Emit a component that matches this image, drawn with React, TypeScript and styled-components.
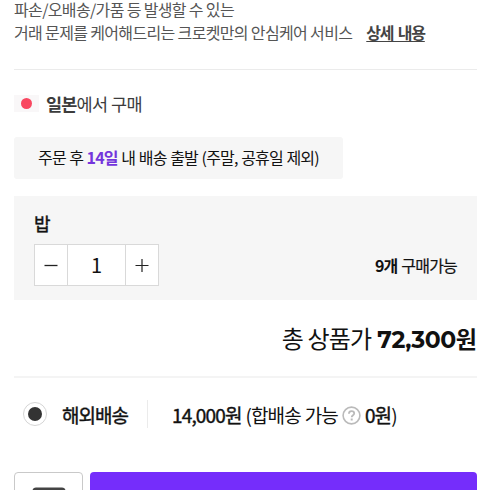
import React from "react";
import styled, { createGlobalStyle } from "styled-components";

const GlobalStyle = createGlobalStyle`
  * { box-sizing: border-box; }
  body {
    margin: 0;
    background: #fff;
    color: #111;
    font-family: "Noto Sans CJK KR", "Noto Sans", sans-serif;
    overflow: hidden;
  }
  button { font: inherit; color: inherit; cursor: pointer; }
`;

const Page = styled.main`
  width: 490px;
  height: 490px;
  padding: 0 13px 0 14px;
  overflow: hidden;
  display: flex;
  flex-direction: column;
  & > * { flex-shrink: 0; }
`;

const Text = styled.span<{
  $size: number;
  $track?: number;
  $space?: number;
  $bold?: boolean;
  $stroke?: number;
  $color?: string;
}>`
  font-size: ${(p) => p.$size}px;
  letter-spacing: ${(p) => p.$track ?? 0}px;
  word-spacing: ${(p) => p.$space ?? 0}px;
  font-weight: ${(p) => (p.$bold ? 700 : 400)};
  -webkit-text-stroke: ${(p) => p.$stroke ?? 0}px currentColor;
  color: ${(p) => p.$color ?? "inherit"};
  white-space: pre;
`;

const Notice = styled.section`
  height: 70px;
  border-bottom: 1px solid #ebebeb;
  color: #555;
`;

const NoticeLine = styled.div`
  display: flex;
  height: 24px;
  line-height: 24px;
  &:first-child {
    height: 20px;
    line-height: 18px;
  }
`;

const DetailLink = styled.a`
  margin-left: 14px;
  font-size: 16px;
  font-weight: 700;
  letter-spacing: -1.2px;
  word-spacing: 2px;
  color: #444;
  text-decoration: underline;
  text-underline-offset: 2px;
  text-decoration-thickness: 1px;
`;

const Origin = styled.section`
  display: flex;
  align-items: center;
  height: 24px;
  margin-top: 21px;
  color: #3c3c3c;
`;

const Flag = styled.span`
  display: grid;
  place-items: center;
  width: 25px;
  height: 17px;
  margin: 1px 7px 0 0;
  background: #f9f7f8;
  &::after {
    content: "";
    width: 11px;
    height: 11px;
    border-radius: 50%;
    background: #f94760;
  }
`;

const ShippingNote = styled.section`
  display: flex;
  align-items: center;
  width: 329px;
  height: 42px;
  margin-top: 22px;
  padding-left: 24px;
  border-radius: 3px;
  background: #f6f6f6;
  line-height: 40px;
  padding-bottom: 2px;
`;

const OptionCard = styled.section`
  height: 104px;
  margin-top: 17px;
  padding: 14px 20px 0;
  background: #f6f6f6;
`;

const OptionName = styled.div`
  height: 34px;
  line-height: 26px;
`;

const OptionRow = styled.div`
  display: flex;
  align-items: center;
  justify-content: space-between;
`;

const Stepper = styled.div`
  display: grid;
  grid-template-columns: 32px 59px 32px;
  width: 125px;
  height: 42px;
  background: #fff;
  border: 1px solid #d9d9d9;
`;

const StepButton = styled.button`
  display: grid;
  place-items: center;
  padding: 0;
  border: 0;
  background: none;
`;

const Quantity = styled.div`
  border: solid #d9d9d9;
  border-width: 0 1px;
  text-align: center;
  font-size: 20px;
  line-height: 40px;
`;

const Total = styled.section`
  display: flex;
  justify-content: flex-end;
  align-items: baseline;
  height: 78px;
  padding-top: 20px;
  border-bottom: 2px solid #f4f4f4;
  line-height: 36px;
`;

const TotalNumber = styled.span`
  margin-left: 6px;
  font-family: Montserrat, Inter, sans-serif;
  font-size: 23.5px;
  font-weight: 700;
  letter-spacing: -0.4px;
`;

const Delivery = styled.section`
  display: flex;
  align-items: center;
  height: 28px;
  margin-top: 22px;
  padding-left: 9px;
`;

const Radio = styled.span`
  display: grid;
  place-items: center;
  width: 24px;
  height: 24px;
  margin-right: 15px;
  border: 1px solid #d5d5d5;
  border-radius: 50%;
  &::after {
    content: "";
    width: 14px;
    height: 14px;
    border-radius: 50%;
    background: #333;
  }
`;

const DeliveryLabel = styled.span`
  display: flex;
  align-items: center;
  width: 86px;
  height: 28px;
  border-right: 1px solid #ebebeb;
  margin-right: 24px;
`;

const HelpIcon = styled.svg`
  margin: 2px 4px 0 4px;
  flex: none;
`;

const Actions = styled.section`
  display: flex;
  gap: 7px;
  margin-top: 44px;
`;

const SaveButton = styled.button`
  display: flex;
  justify-content: center;
  width: 69px;
  height: 52px;
  padding: 14px 0 0;
  border: 1px solid #c9c9c9;
  border-radius: 4px;
  background: #fff;
`;

const BuyButton = styled.button`
  flex: 1;
  height: 52px;
  border: 0;
  border-radius: 4px;
  background: #752dfb;
`;

export default function App() {
  return (
    <Page>
      <GlobalStyle />
      <Notice>
        <NoticeLine>
          <Text $size={16} $track={-0.65}>파손/오배송/가품 등 발생할 수 있는</Text>
        </NoticeLine>
        <NoticeLine>
          <Text $size={16} $track={-0.65}>거래 문제를 케어해드리는 크로켓만의 안심케어 서비스</Text>
          <DetailLink>상세 내용</DetailLink>
        </NoticeLine>
      </Notice>

      <Origin>
        <Flag />
        <Text $size={17.5} $track={-0.8} $bold>일본</Text>
        <Text $size={17.5} $track={-0.6}>에서 구매</Text>
      </Origin>

      <ShippingNote>
        <Text $size={16} $track={-0.8} $space={0.6}>주문 후 </Text>
        <Text $size={16} $track={-0.8} $bold $color="#7435dc">14일</Text>
        <Text $size={16} $track={-0.85} $space={0.9}> 내 배송 출발 (주말, 공휴일 제외)</Text>
      </ShippingNote>

      <OptionCard>
        <OptionName>
          <Text $size={18} $stroke={0.4}>밥</Text>
        </OptionName>
        <OptionRow>
          <Stepper>
            <StepButton aria-label="minus">
              <svg width="14" height="14" viewBox="0 0 14 14">
                <path d="M0.5 7.5H13.5" stroke="#222" strokeWidth="1.3" />
              </svg>
            </StepButton>
            <Quantity>1</Quantity>
            <StepButton aria-label="plus">
              <svg width="14" height="14" viewBox="0 0 14 14">
                <path d="M0.5 7.5H13.5M7 1V14" stroke="#222" strokeWidth="1.2" />
              </svg>
            </StepButton>
          </Stepper>
          <span>
            <Text $size={16} $track={-0.8} $bold>9개</Text>
            <Text $size={16} $track={-0.8} $space={1} $stroke={0.2}> 구매가능</Text>
          </span>
        </OptionRow>
      </OptionCard>

      <Total>
        <Text $size={24} $track={-0.8}>총 상품가</Text>
        <TotalNumber>72,300</TotalNumber>
        <Text $size={23} $bold>원</Text>
      </Total>

      <Delivery>
        <Radio />
        <DeliveryLabel>
          <Text $size={19} $track={-1} $stroke={0.4}>해외배송</Text>
        </DeliveryLabel>
        <Text $size={19} $track={-0.85} $stroke={0.4}>14,000원</Text>
        <Text $size={19} $track={-0.9} $space={0.6}> (합배송 가능</Text>
        <HelpIcon width="19" height="19" viewBox="0 0 19 19" fill="none" stroke="#bababa">
          <circle cx="9.5" cy="9.5" r="8.4" strokeWidth="1.6" />
          <path d="M6.9 7.7C7 5.8 8.1 5.1 9.5 5.1C11.1 5.1 12.2 6 12.2 7.4C12.2 9.2 9.7 9.3 9.7 11.2" strokeWidth="1.8" />
          <path d="M9.7 12.5V14.5" strokeWidth="2" />
        </HelpIcon>
        <Text $size={19} $track={-0.9} $stroke={0.4}>0원</Text>
        <Text $size={19}>)</Text>
      </Delivery>

      <Actions>
        <SaveButton aria-label="save">
          <svg width="34" height="34" viewBox="0 0 34 34" fill="none">
            <rect x="2" y="2" width="30" height="28" rx="2" stroke="#444" strokeWidth="3" />
          </svg>
        </SaveButton>
        <BuyButton aria-label="buy" />
      </Actions>
    </Page>
  );
}
